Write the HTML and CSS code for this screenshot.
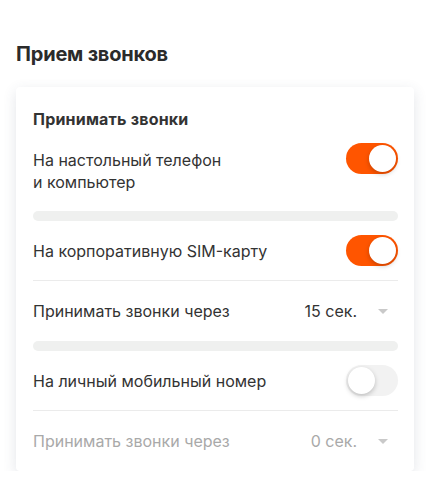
FILE: index.html
```html
<!doctype html>
<html>
<head>
<meta charset="utf-8">
<title>Прием звонков</title>
<link rel="stylesheet" href="styles.css">
</head>
<body>
<h1 class="page-title">Прием звонков</h1>

<div class="card">
    <h2 class="card-title">Принимать звонки</h2>

    <div class="row row-top">
        <span class="label">На настольный телефон<br>и компьютер</span>
        <span class="switch on"></span>
    </div>
    <div class="bar"></div>

    <div class="row line">
        <span class="label">На корпоративную SIM-карту</span>
        <span class="switch on"></span>
    </div>
    <div class="row">
        <span class="label">Принимать звонки через</span>
        <span class="select">15 сек.<i class="caret"></i></span>
    </div>
    <div class="bar"></div>

    <div class="row line">
        <span class="label">На личный мобильный номер</span>
        <span class="switch"></span>
    </div>
    <div class="row muted">
        <span class="label">Принимать звонки через</span>
        <span class="select">0 сек.<i class="caret"></i></span>
    </div>
</div>
</body>
</html>
```
FILE: styles.css
```css
body,h1,h2,div,span{margin:0; padding:0;}
body{
	padding:42px 16px 0;
	font-family:Inter, 'Liberation Sans', sans-serif;
	color:#333;
	background:#fff;
}
.page-title{
	font-size:20px;
	line-height:24px;
	font-weight:700;
	color:#2b2b2b;
	letter-spacing:-0.2px;
}
.card{
	margin-top:21px;
	padding:0 16px 0 17px;
	border-radius:4px;
	background:#fff;
	box-shadow:0 4px 14px rgba(60,70,100,0.14);
}
.card-title{
	padding-top:20px;
	font-size:16px;
	line-height:24px;
	font-weight:700;
	color:#333;
	letter-spacing:0.2px;
}
.row{
	display:flex;
	align-items:center;
	justify-content:space-between;
	height:60px;
	font-size:16px;
	line-height:22px;
	color:#333;
}
.row.line{border-bottom:1px solid #ebebeb; height:59px;}
.row-top{
	height:auto;
	align-items:flex-start;
	padding:18px 0;
}
.row-top .switch{margin-top:-6px;}
.muted{color:#a9a9a9;}

.bar{
	height:10px;
	border-radius:5px;
	background:#eff0ef;
}

.switch{
	position:relative;
	flex:none;
	width:52px;
	height:31px;
	border-radius:16px;
	background:#f2f2f2;
}
.switch:after{
	content:'';
	position:absolute;
	left:2px;
	top:2px;
	width:27px;
	height:27px;
	border-radius:50%;
	background:#fff;
	box-shadow:0 2px 5px rgba(0,0,0,0.22);
}
.switch.on{background:#ff5500;}
.switch.on:after{left:23px;}

.select{
	display:flex;
	align-items:center;
	padding-right:10px;
}
.caret{
	width:0;
	height:0;
	margin-left:21px;
	border-left:5px solid transparent;
	border-right:5px solid transparent;
	border-top:5px solid #c9c9c9;
}
```
